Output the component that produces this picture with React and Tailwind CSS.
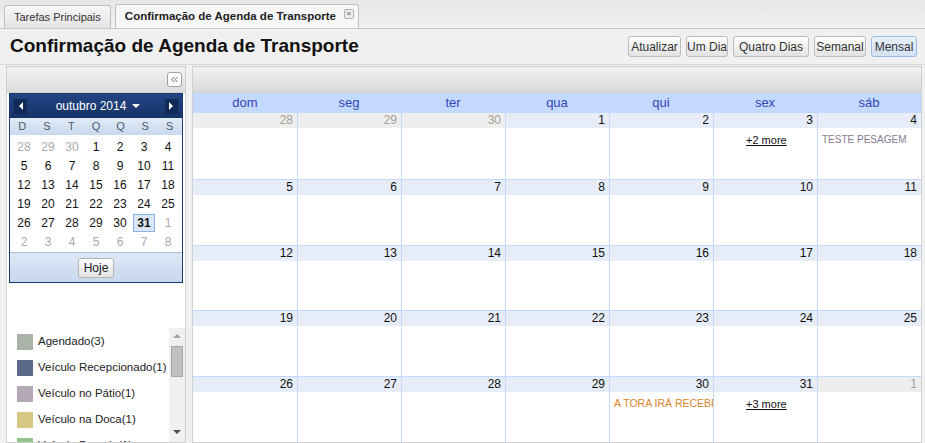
import { ChevronsLeft } from 'lucide-react';

const dows = ['D', 'S', 'T', 'Q', 'Q', 'S', 'S'];
const mini = [
  [28, 29, 30, 1, 2, 3, 4],
  [5, 6, 7, 8, 9, 10, 11],
  [12, 13, 14, 15, 16, 17, 18],
  [19, 20, 21, 22, 23, 24, 25],
  [26, 27, 28, 29, 30, 31, 1],
  [2, 3, 4, 5, 6, 7, 8],
];

const legend = [
  { label: 'Agendado(3)', color: 'bg-[#a9b3a8]' },
  { label: 'Veículo Recepcionado(1)', color: 'bg-[#5b6a8a]' },
  { label: 'Veículo no Pátio(1)', color: 'bg-[#b5a9b8]' },
  { label: 'Veículo na Doca(1)', color: 'bg-[#d7c983]' },
  { label: 'Veículo Pesado(1)', color: 'bg-[#93c48d]' },
];

const dayNames = ['dom', 'seg', 'ter', 'qua', 'qui', 'sex', 'sáb'];

const weeks = [
  [28, 29, 30, 1, 2, 3, 4],
  [5, 6, 7, 8, 9, 10, 11],
  [12, 13, 14, 15, 16, 17, 18],
  [19, 20, 21, 22, 23, 24, 25],
  [26, 27, 28, 29, 30, 31, 1],
];

function isOther(w, d) {
  return (w === 0 && d < 3) || (w === 4 && d === 6);
}

function Btn({ children, active, w }) {
  return (
    <button
      className={`${w} h-[21px] rounded-[3px] border text-[12px] text-[#333] ${
        active
          ? 'border-[#99bbe8] bg-gradient-to-b from-[#e8f0fb] to-[#d3e1f4]'
          : 'border-[#bdbdbd] bg-gradient-to-b from-[#ffffff] to-[#e2e2e2]'
      }`}
    >
      {children}
    </button>
  );
}

function MiniCalendar() {
  return (
    <div className="mx-[2px] border border-[#1b3b73] bg-white">
      <div className="h-[24px] flex items-center justify-between px-[4px] bg-gradient-to-b from-[#234584] to-[#163266]">
        <div className="w-[13px] h-[15px] bg-[#122a5a] flex items-center justify-center">
          <div className="w-0 h-0 border-y-[4px] border-y-transparent border-r-[4px] border-r-white" />
        </div>
        <div className="flex items-center gap-[6px] text-white text-[12px] pl-[4px]">
          <span>outubro 2014</span>
          <div className="w-0 h-0 border-x-[4px] border-x-transparent border-t-[4px] border-t-white" />
        </div>
        <div className="w-[13px] h-[15px] bg-[#122a5a] flex items-center justify-center">
          <div className="w-0 h-0 border-y-[4px] border-y-transparent border-l-[4px] border-l-white" />
        </div>
      </div>
      <div className="grid grid-cols-7 h-[17px] bg-gradient-to-b from-[#e3ebf7] to-[#c9d8ee] text-[11px] leading-[17px] text-[#4b5a73] text-center">
        {dows.map((d, i) => (
          <span key={i}>{d}</span>
        ))}
      </div>
      <div className="px-[2px] pt-[2px] pb-[1px]">
        {mini.map((row, r) => (
          <div key={r} className="grid grid-cols-7 h-[19px] text-[12px] text-center items-center">
            {row.map((n, c) => {
              const other = (r === 0 && c < 3) || r === 5 || (r === 4 && c === 6);
              const sel = r === 4 && c === 5;
              return (
                <span key={c} className="flex justify-center">
                  <span
                    className={
                      sel
                        ? 'w-[22px] h-[18px] leading-[16px] border border-[#8db2e3] bg-[#dbe6f6] font-bold text-[#111]'
                        : other
                        ? 'text-[#a9a9a9]'
                        : 'text-[#111]'
                    }
                  >
                    {n}
                  </span>
                </span>
              );
            })}
          </div>
        ))}
      </div>
      <div className="h-[30px] flex items-center justify-center bg-gradient-to-b from-[#dfe8f6] to-[#c7d7ee] border-t border-[#a9bfe0]">
        <button className="h-[20px] px-[5px] rounded-[3px] border border-[#b5b5b5] bg-gradient-to-b from-[#ffffff] to-[#e2e2e2] text-[12px] text-[#222]">
          Hoje
        </button>
      </div>
    </div>
  );
}

function LeftPanel() {
  return (
    <div className="w-[180px] flex flex-col border border-[#d0d0d0] bg-white">
      <div className="h-[26px] flex items-center justify-end pr-[3px] bg-gradient-to-b from-[#f2f2f2] to-[#dcdcdc] border-b border-[#d0d0d0]">
        <div className="w-[15px] h-[15px] rounded-[3px] border border-[#a0a0a0] bg-white flex items-center justify-center">
          <ChevronsLeft size={11} strokeWidth={2} className="text-[#555]" />
        </div>
      </div>
      <MiniCalendar />
      <div className="flex-1 flex pt-[45px] overflow-hidden">
        <div className="flex-1 pl-[10px] pt-[5px] flex flex-col gap-[8px] overflow-hidden">
          {legend.map((l) => (
            <div key={l.label} className="flex items-center gap-[5px] h-[18px] shrink-0">
              <div className={`w-[16px] h-[16px] shrink-0 ${l.color}`} />
              <span className="text-[11.5px] text-[#222] whitespace-nowrap">{l.label}</span>
            </div>
          ))}
        </div>
        <div className="w-[16px] bg-[#f0f0f0] flex flex-col items-center pt-[6px]">
          <div className="w-0 h-0 border-x-[4px] border-x-transparent border-b-[4px] border-b-[#a3a3a3]" />
          <div className="mt-[8px] w-[12px] h-[31px] bg-[#c1c1c1] border border-[#a8a8a8]" />
          <div className="flex-1" />
          <div className="mb-[8px] w-0 h-0 border-x-[4px] border-x-transparent border-t-[4px] border-t-[#505050]" />
        </div>
      </div>
    </div>
  );
}

function Cell({ n, other, w, d }) {
  return (
    <div className={`flex flex-col min-w-0 ${d > 0 ? 'border-l border-[#c3d9ff]' : ''}`}>
      <div
        className={`h-[15px] text-[12px] leading-[15px] text-right pr-[4px] ${
          other ? 'bg-[#eeeeee] text-[#a59e96]' : 'bg-[#e6edf8] text-[#111]'
        } ${w === 4 && d === 6 ? 'text-[#8fa08f]' : ''}`}
      >
        {n}
      </div>
      <div className="flex-1 pt-[4px] px-[4px] text-[11px] overflow-hidden whitespace-nowrap">
        {w === 0 && d === 5 && <div className="pl-[28px] underline text-[#111]">+2 more</div>}
        {w === 0 && d === 6 && <div className="text-[10px] text-[#857b90]">TESTE PESAGEM</div>}
        {w === 4 && d === 4 && <div className="text-[10.5px] text-[#d8842c]">A TORA IRÁ RECEBER</div>}
        {w === 4 && d === 5 && <div className="pl-[28px] underline text-[#111]">+3 more</div>}
      </div>
    </div>
  );
}

function RightPanel() {
  return (
    <div className="flex-1 flex flex-col border border-[#d0d0d0] bg-white">
      <div className="h-[26px] bg-gradient-to-b from-[#f2f2f2] to-[#d9d9d9] border-b border-[#d0d0d0]" />
      <div className="grid grid-cols-7 h-[20px] bg-[#c3d9ff] text-[13px] leading-[20px] text-center text-[#3545b5]">
        {dayNames.map((d) => (
          <span key={d}>{d}</span>
        ))}
      </div>
      <div className="flex-1 grid grid-rows-5">
        {weeks.map((row, w) => (
          <div key={w} className={`grid grid-cols-7 ${w > 0 ? 'border-t border-[#c3d9ff]' : ''}`}>
            {row.map((n, d) => (
              <Cell key={d} n={n} w={w} d={d} other={isOther(w, d)} />
            ))}
          </div>
        ))}
      </div>
    </div>
  );
}

export default function App() {
  return (
    <div className="w-[925px] h-[443px] overflow-hidden flex flex-col bg-[#f0f0f0] font-['Liberation_Sans',Arial,sans-serif]">
      <div className="h-[29px] flex items-end gap-[4px] pl-[4px] bg-gradient-to-b from-[#e6e6e6] to-[#f2f2f2] border-b border-[#c8c8c8]">
        <div className="h-[23px] px-[9px] flex items-center rounded-t-[3px] border border-b-0 border-[#c0c0c0] bg-gradient-to-b from-[#f7f7f7] to-[#e4e4e4] text-[11px] text-[#333]">
          Tarefas Principais
        </div>
        <div className="h-[24px] pl-[9px] pr-[4px] flex items-center gap-[8px] rounded-t-[3px] border border-b-0 border-[#c0c0c0] bg-[#f6f6f6] text-[11.5px] font-bold text-[#222]">
          Confirmação de Agenda de Transporte
          <div className="w-[10px] h-[10px] mb-[6px] rounded-[2px] border border-[#b0b0b0] bg-[#eee] text-[8px] leading-[8px] text-center text-[#888]">
            ×
          </div>
        </div>
      </div>
      <div className="h-[36px] flex items-center justify-between pl-[10px] pr-[8px] border-b border-[#d8d8d8]">
        <h1 className="text-[19px] font-bold text-[#111]">Confirmação de Agenda de Transporte</h1>
        <div className="flex gap-[5px]">
          <Btn w="w-[53px]">Atualizar</Btn>
          <Btn w="w-[42px]">Um Dia</Btn>
          <Btn w="w-[76px]">Quatro Dias</Btn>
          <Btn w="w-[52px]">Semanal</Btn>
          <Btn w="w-[46px]" active>
            Mensal
          </Btn>
        </div>
      </div>
      <div className="flex-1 flex gap-[6px] pl-[6px] pr-[3px] pt-[1px] min-h-0">
        <LeftPanel />
        <RightPanel />
      </div>
    </div>
  );
}
